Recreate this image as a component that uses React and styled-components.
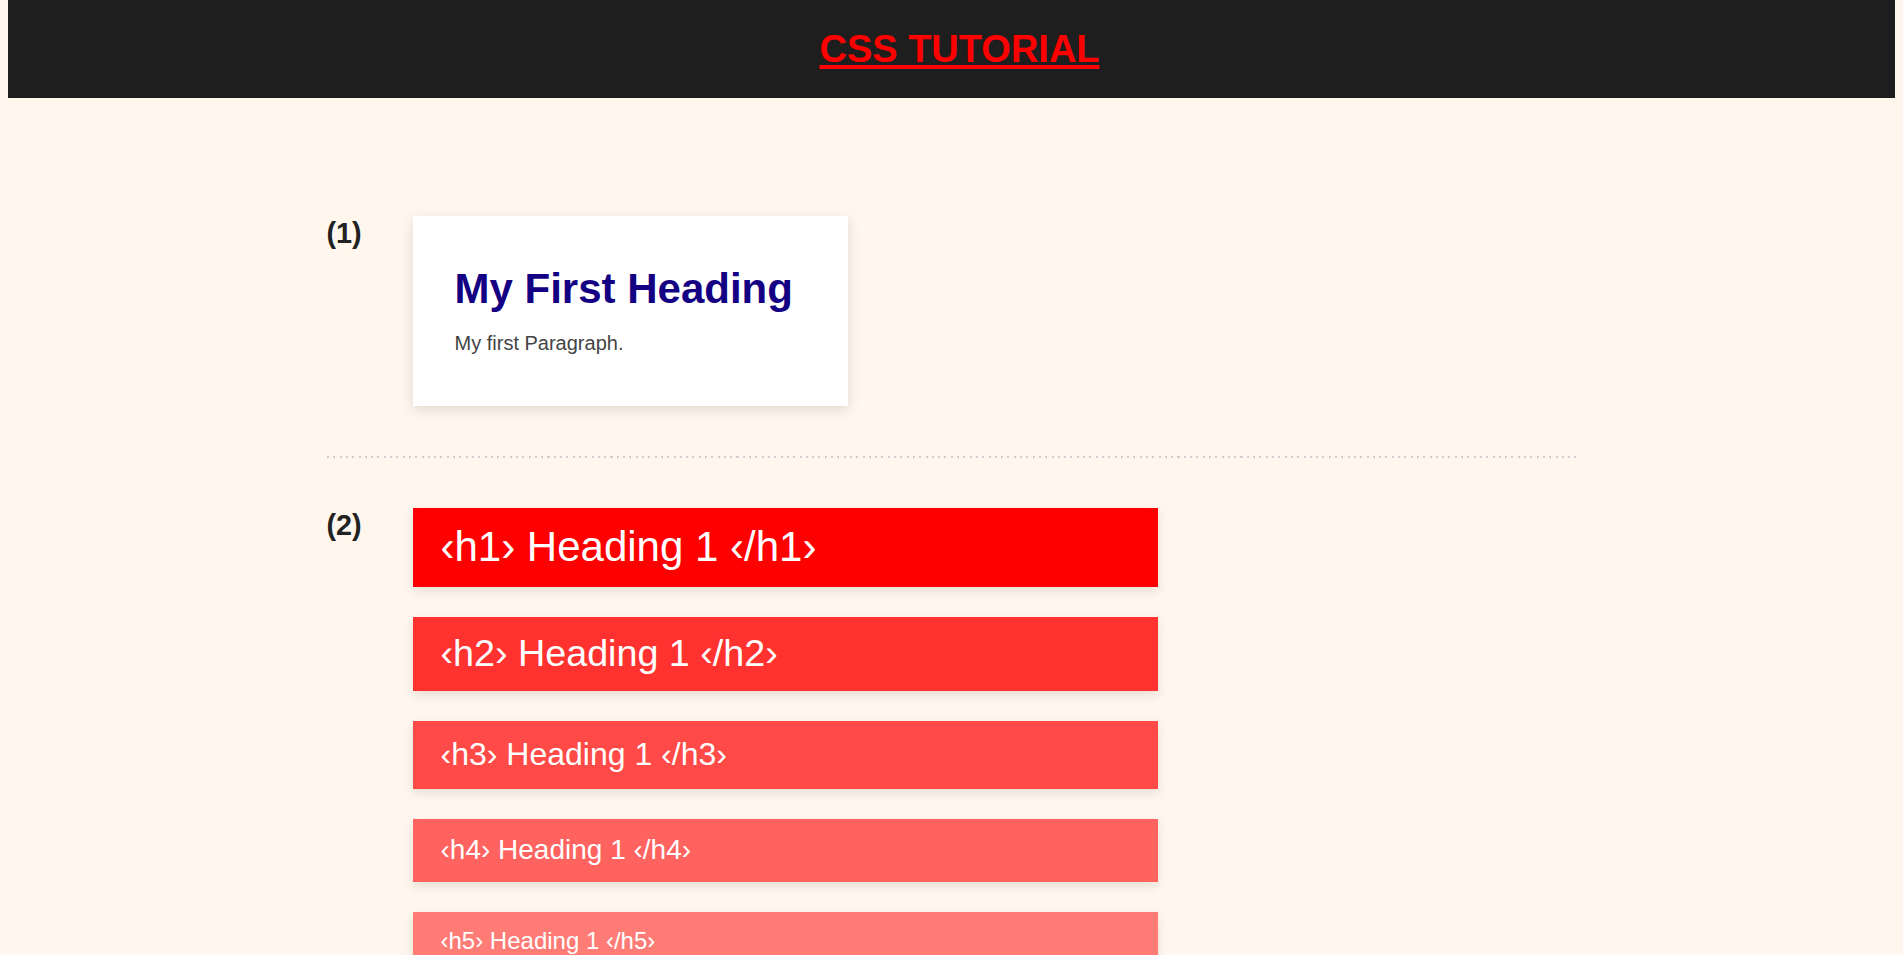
import React from "react";
import styled, { createGlobalStyle } from "styled-components";

const GlobalStyle = createGlobalStyle`
  html {
    overflow: hidden;
    scrollbar-width: none;
  }
  html::-webkit-scrollbar {
    display: none;
    width: 0;
    height: 0;
  }
  body {
    margin: 0 8px;
    background: #fff7ed;
    font-family: "Liberation Sans", Arial, sans-serif;
  }
`;

const Header = styled.header`
  box-sizing: border-box;
  height: 98px;
  margin-right: -40px;
  padding-right: 24px;
  background: #1e1e1e;
  display: flex;
  align-items: center;
  justify-content: center;
`;

const Title = styled.h1`
  margin: 0;
  font-size: 38px;
  font-weight: 700;
  color: #ff0000;
  text-decoration: underline;
  text-decoration-thickness: 4px;
  text-underline-offset: 3px;
`;

const Main = styled.main`
  max-width: 1250px;
  margin: 0 auto;
  padding-top: 118px;
`;

const Section = styled.section`
  display: flex;
  align-items: flex-start;
  padding: ${(p) => (p.$first ? "0 0 50px" : "50px 0")};
`;

const Label = styled.div`
  flex: 0 0 86px;
  font-size: 28.8px;
  font-weight: 700;
  color: #222;
  margin-top: 1px;
`;

const Content = styled.div`
  display: flex;
  flex-direction: column;
  gap: 30px;
`;

const Card = styled.div`
  box-sizing: border-box;
  width: 435px;
  padding: 49px 42px 51px;
  background: #fff;
  box-shadow: 0 4px 12px rgba(0, 0, 0, 0.12);
`;

const CardHeading = styled.h2`
  margin: 0 0 19px;
  font-size: 42px;
  font-weight: 700;
  color: #140082;
`;

const CardText = styled.p`
  margin: 0;
  font-size: 20px;
  color: #444;
`;

const Divider = styled.div`
  height: 2px;
  background-image: repeating-linear-gradient(
    to right,
    #cfcfcf 0,
    #cfcfcf 2px,
    transparent 2px,
    transparent 6.3px
  );
`;

const Bar = styled.div`
  box-sizing: border-box;
  width: 745px;
  padding: 15px 28px 16px;
  background: rgba(255, 0, 0, ${(p) => p.$alpha});
  box-shadow: 0 4px 10px rgba(0, 0, 0, 0.1);
  color: #fff;
  font-size: ${(p) => p.$size}px;
  font-weight: 400;
  margin: 0;
`;

const bars = [
  { tag: "h1", size: 42, alpha: 1 },
  { tag: "h2", size: 37.7, alpha: 0.8 },
  { tag: "h3", size: 32, alpha: 0.7 },
  { tag: "h4", size: 28, alpha: 0.6 },
  { tag: "h5", size: 24, alpha: 0.5 },
  { tag: "h6", size: 20, alpha: 0.4 },
];

export default function App() {
  return (
    <>
      <GlobalStyle />
      <Header>
        <Title>CSS TUTORIAL</Title>
      </Header>
      <Main>
        <Section $first>
          <Label>(1)</Label>
          <Card>
            <CardHeading>My First Heading</CardHeading>
            <CardText>My first Paragraph.</CardText>
          </Card>
        </Section>
        <Divider />
        <Section>
          <Label>(2)</Label>
          <Content>
            {bars.map((b) => (
              <Bar key={b.tag} as={b.tag} $size={b.size} $alpha={b.alpha}>
                {`‹${b.tag}› Heading 1 ‹/${b.tag}›`}
              </Bar>
            ))}
          </Content>
        </Section>
      </Main>
    </>
  );
}
